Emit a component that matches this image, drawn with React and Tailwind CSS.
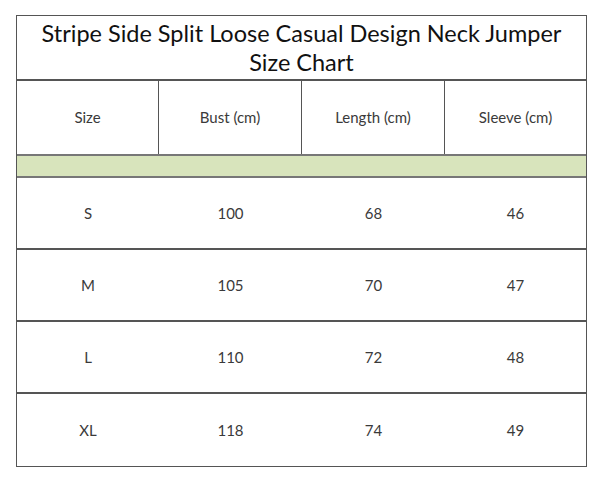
const columns = ["Size", "Bust (cm)", "Length (cm)", "Sleeve (cm)"]

const rows = [
  ["S", "100", "68", "46"],
  ["M", "105", "70", "47"],
  ["L", "110", "72", "48"],
  ["XL", "118", "74", "49"],
]

export default function App() {
  return (
    <div className="w-[600px] h-[482px] bg-white pt-[15px] pl-[16px] font-['Lato',sans-serif]">
      <div className="w-[571px] border border-[#555]">
        {/* title */}
        <div className="h-[65px] flex flex-col items-center justify-center border-b-2 border-[#555] text-[23.5px] leading-[29px] text-[#111]">
          <div>Stripe Side Split Loose Casual Design Neck Jumper</div>
          <div>Size Chart</div>
        </div>

        {/* header */}
        <div className="grid grid-cols-[142px_143px_143px_1fr] h-[73px] text-[15px] text-[#3a3a3a]">
          {columns.map((c, i) => (
            <div key={c} className={`flex items-center justify-center ${i < 3 ? 'border-r border-[#555]' : ''}`}>{c}</div>
          ))}
        </div>

        {/* green band */}
        <div className="h-[24px] bg-[#d8e4bc] border-y-2 border-[#777]"></div>

        {rows.map((r, ri) => (
          <div key={r[0]} className={`grid grid-cols-[142px_143px_143px_1fr] h-[72px] text-[15px] text-[#3a3a3a] ${ri < rows.length - 1 ? 'border-b-2 border-[#555]' : ''}`}>
            {r.map((v, i) => (
              <div key={i} className="flex items-center justify-center">{v}</div>
            ))}
          </div>
        ))}
      </div>
    </div>
  )
}
